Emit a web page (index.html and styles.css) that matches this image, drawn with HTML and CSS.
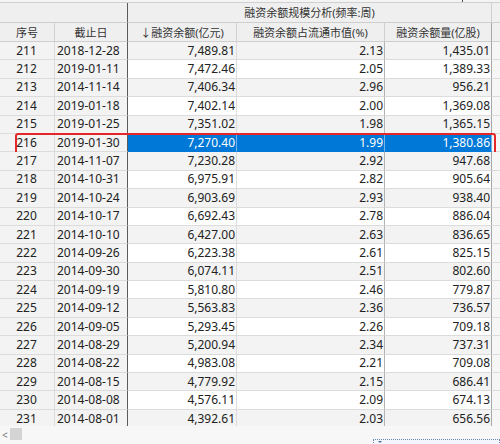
FILE: index.html
```html
<!DOCTYPE html>
<html lang="zh-CN">
<head>
<meta charset="utf-8">
<title>融资余额规模分析</title>
<link rel="stylesheet" href="styles.css">
</head>
<body>
<div class="page">
  <div class="topstrip"><span class="topmark"></span></div>
  <div class="viewport">
    <div class="hrow hrow1">
      <div class="hc span2 frozen-end"></div>
      <div class="hc span3 group">融资余额规模分析(频率:周)</div>
      <div class="hc fill"></div>
    </div>
    <div class="hrow hrow2">
      <div class="hc">序号</div>
      <div class="hc frozen-end">截止日</div>
      <div class="hc">↓融资余额(亿元)</div>
      <div class="hc">融资余额占流通市值(%)</div>
      <div class="hc dark-r">融资余额量(亿股)</div>
      <div class="hc fill"></div>
    </div>
    <div class="body" id="body"></div>
  </div>
  <div class="hscroll">
    <span class="arrow">&lt;</span>
    <span class="thumb"></span>
  </div>
  <div class="dropbox"><span class="tri"></span></div>
</div>
<script>
const data = [
["211","2018-12-28","7,489.81","2.13","1,435.01"],
["212","2019-01-11","7,472.46","2.05","1,389.33"],
["213","2014-11-14","7,406.34","2.96","956.21"],
["214","2019-01-18","7,402.14","2.00","1,369.08"],
["215","2019-01-25","7,351.02","1.98","1,365.15"],
["216","2019-01-30","7,270.40","1.99","1,380.86"],
["217","2014-11-07","7,230.28","2.92","947.68"],
["218","2014-10-31","6,975.91","2.82","905.64"],
["219","2014-10-24","6,903.69","2.93","938.40"],
["220","2014-10-17","6,692.43","2.78","886.04"],
["221","2014-10-10","6,427.00","2.63","836.65"],
["222","2014-09-26","6,223.38","2.61","825.15"],
["223","2014-09-30","6,074.11","2.51","802.60"],
["224","2014-09-19","5,810.80","2.46","779.87"],
["225","2014-09-12","5,563.83","2.36","736.57"],
["226","2014-09-05","5,293.45","2.26","709.18"],
["227","2014-08-29","5,200.94","2.34","737.31"],
["228","2014-08-22","4,983.08","2.21","709.08"],
["229","2014-08-15","4,779.92","2.15","686.41"],
["230","2014-08-08","4,576.11","2.09","674.13"],
["231","2014-08-01","4,392.61","2.03","656.56"]
];
const body = document.getElementById('body');
data.forEach(r => {
  const row = document.createElement('div');
  const n = parseInt(r[0], 10);
  row.className = 'row ' + (n % 2 === 0 ? 'even' : 'odd') + (r[0] === '216' ? ' selected' : '');
  row.innerHTML =
    '<div class="c no">' + r[0] + '</div>' +
    '<div class="c date frozen-end">' + r[1] + '</div>' +
    '<div class="c num s">' + r[2] + '</div>' +
    '<div class="c num s mid-r">' + r[3] + '</div>' +
    '<div class="c num s dark-r">' + r[4] + '</div>' +
    '<div class="c fill"></div>' +
    (r[0] === '216' ? '<div class="mark"></div>' : '');
  body.appendChild(row);
});
</script>
</body>
</html>
```
FILE: styles.css
```css
* { box-sizing: border-box; }
html, body { margin: 0; padding: 0; }
body {
  width: 500px;
  height: 444px;
  overflow: hidden;
  background: #f7f7f7;
  font-family: "Noto Sans", "Noto Sans CJK SC", sans-serif;
  font-size: 12px;
  color: #222;
}
.page { position: relative; width: 500px; height: 444px; }

.topstrip {
  position: relative;
  height: 3px;
  background: #f4f4f4;
  border-bottom: 1px solid #d0d0d0;
}
.topmark {
  position: absolute;
  left: 462px;
  top: 0;
  width: 1px;
  height: 2px;
  background: #555;
}

.viewport {
  height: 423px;
  overflow: hidden;
  background: #f4f4f4;
}

.hrow, .row {
  display: grid;
  grid-template-columns: 55px 73px 109px 148px 107px 8px;
}
.hrow { background: #efefef; }
.hrow1 { height: 19.5px; }
.hrow2 { height: 19.5px; }
.hc {
  display: flex;
  align-items: center;
  justify-content: center;
  border-right: 1px solid #d0d0d0;
  border-bottom: 1px solid #cfcfcf;
  color: #333;
  white-space: nowrap;
  font-size: 11px;
}
.span2 { grid-column: span 2; }
.span3 { grid-column: span 3; }
.hc.fill { border-right: none; background: #f0f0f0; }
.frozen-end { border-right: 1px solid #5a5a5a !important; }
.dark-r { border-right: 1px solid #a8a8a8 !important; }

.row {
  position: relative;
  height: 18.4px;
}
.c {
  display: flex;
  align-items: center;
  border-right: 1px solid #dcdcdc;
  border-bottom: 1px solid #dcdcdc;
  white-space: nowrap;
  line-height: 1;
}
.c.no { justify-content: center; background: #f3f3f3; padding-right: 1px; }
.c.date { padding-left: 2px; background: #f3f3f3; }
.c.num { justify-content: flex-end; padding-right: 1px; }
.c.mid-r { border-right-color: #b4b4b4; }
.row.odd .s { background: #f3f3f3; }
.row.even .s { background: #ffffff; }
.c.fill { border-right: none; background: #f6f6f6; }

.row.selected .s {
  background: #0078d7;
  color: #fff;
  border-right-color: rgba(255,255,255,0.45) !important;
  border-bottom-color: #0078d7;
}

.mark {
  position: absolute;
  left: 15px;
  top: -1px;
  width: 481px;
  height: 22px;
  border: 2px solid #e5262a;
  border-radius: 3px;
  pointer-events: none;
}

.hscroll {
  position: relative;
  height: 18px;
  background: #f7f7f7;
}
.arrow {
  position: absolute;
  left: 2px;
  top: 2px;
  font-size: 10px;
  color: #777;
}
.thumb {
  position: absolute;
  left: 10px;
  top: 2px;
  width: 12px;
  height: 12px;
  background: #d4d4d4;
}

.dropbox {
  position: absolute;
  left: 373px;
  top: 439px;
  width: 127px;
  height: 10px;
  border: 1px dotted #6f86b8;
  background: #f3f6fc;
}
.tri {
  position: absolute;
  left: 4px;
  top: 1px;
  width: 0;
  height: 0;
  border-left: 2px solid transparent;
  border-right: 2px solid transparent;
  border-top: 2px solid #4a6aa0;
}
```
